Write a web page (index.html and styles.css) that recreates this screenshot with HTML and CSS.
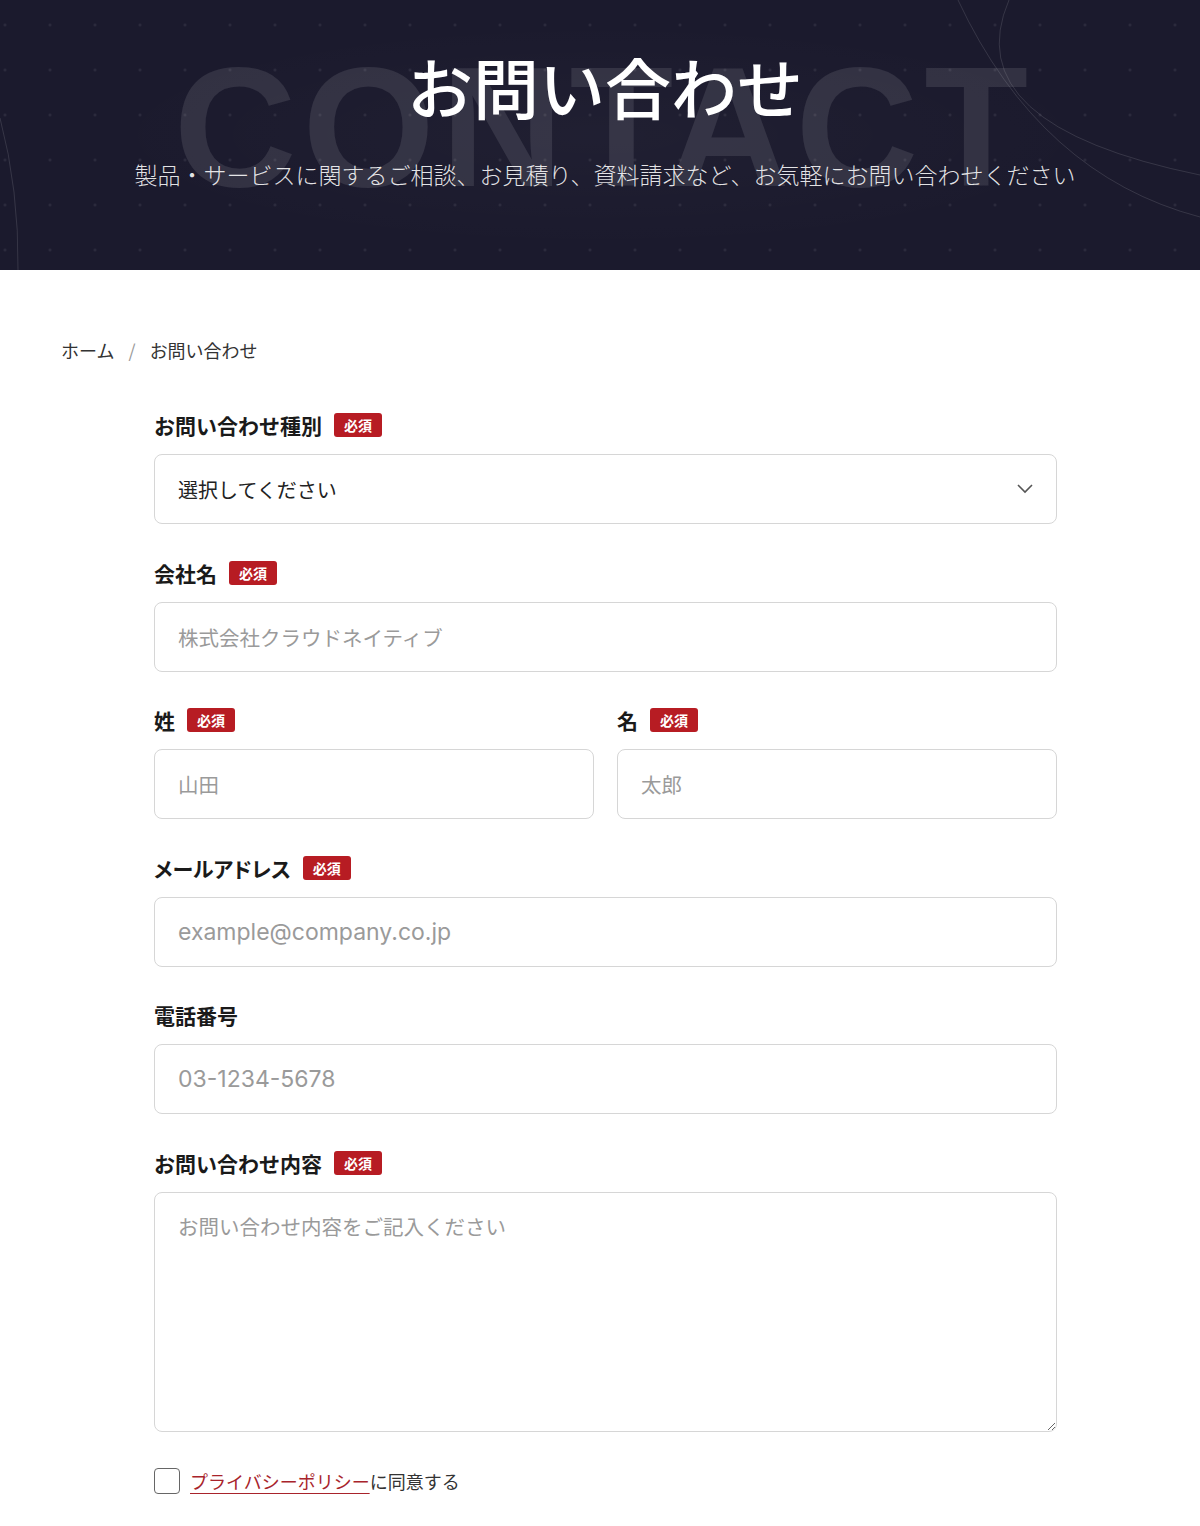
FILE: index.html
```html
<!DOCTYPE html>
<html lang="ja">
	<head>
		<meta charset="utf-8">
		<title>お問い合わせ</title>
		<link rel="stylesheet" href="styles.css">
	</head>
	<body>
		<!-- ページヘッダー -->
		<header class="hero">
			<svg class="hero-lines" width="1200" height="270" viewBox="0 0 1200 270">
				<path d="M0,118 Q19,190 18,270" />
				<path d="M958,0 Q1040,175 1200,217" />
				<path d="M1009,0 Q955,125 1200,175" />
			</svg>
			<div class="hero-bg" aria-hidden="true">CONTACT</div>
			<h1 class="hero-title">お問い合わせ</h1>
			<p class="hero-sub">製品・サービスに関するご相談、お見積り、資料請求など、お気軽にお問い合わせください</p>
		</header>

		<main class="wrap">
			<nav class="crumb">
				<a href="#">ホーム</a>
				<span class="sep">/</span>
				<span>お問い合わせ</span>
			</nav>

			<form class="form">
				<div class="field">
					<label class="label">お問い合わせ種別<em class="req">必須</em></label>
					<div class="select-box">
						<select class="input select">
							<option>選択してください</option>
							<option>製品について</option>
							<option>お見積り</option>
							<option>資料請求</option>
							<option>その他</option>
						</select>
						<svg class="chev" width="18" height="12" viewBox="0 0 18 12">
							<path d="M2,2 L9,9 L16,2" />
						</svg>
					</div>
				</div>

				<div class="field">
					<label class="label">会社名<em class="req">必須</em></label>
					<input class="input" type="text" placeholder="株式会社クラウドネイティブ">
				</div>

				<div class="row">
					<div class="field">
						<label class="label">姓<em class="req">必須</em></label>
						<input class="input" type="text" placeholder="山田">
					</div>
					<div class="field">
						<label class="label">名<em class="req">必須</em></label>
						<input class="input" type="text" placeholder="太郎">
					</div>
				</div>

				<div class="field">
					<label class="label kana">メールアドレス<em class="req">必須</em></label>
					<input class="input latin" type="email" placeholder="example@company.co.jp">
				</div>

				<div class="field">
					<label class="label">電話番号</label>
					<input class="input latin" type="tel" placeholder="03-1234-5678">
				</div>

				<div class="field">
					<label class="label">お問い合わせ内容<em class="req">必須</em></label>
					<textarea class="input area" placeholder="お問い合わせ内容をご記入ください"></textarea>
				</div>

				<label class="agree">
					<input type="checkbox" class="check">
					<span><a href="#">プライバシーポリシー</a>に同意する</span>
				</label>
			</form>
		</main>
	</body>
</html>
```

FILE: styles.css
```css
body, h1, p{
	margin: 0;
	padding: 0;
}
body{
	font-family: "Noto Sans CJK JP", "Noto Sans", sans-serif;
	color: #1a1a1a;
	background: #fff;
}
a{
	color: inherit;
	text-decoration: none;
}

/* ヘッダー */
.hero{
	position: relative;
	height: 270px;
	overflow: hidden;
	box-sizing: border-box;
	padding: 46px 0 0 10px;
	text-align: center;
	background-color: #1b1a2d;
	background-image:
		radial-gradient(circle, rgba(255,255,255,0.09) 1px, transparent 1.5px),
		radial-gradient(ellipse at 50% 50%, rgba(255,255,255,0.025), transparent 60%);
	background-size: 45px 45px, 100% 100%;
	background-position: -17.5px 2.5px, 0 0;
}
.hero-lines{
	position: absolute;
	left: 0;
	top: 0;
}
.hero-lines path{
	fill: none;
	stroke: rgba(255,255,255,0.12);
	stroke-width: 1;
}
.hero-bg{
	position: absolute;
	left: 0;
	right: 0;
	top: 42px;
	font-family: "Liberation Sans", Arial, sans-serif;
	font-weight: bold;
	font-size: 170px;
	line-height: 1;
	letter-spacing: 6px;
	color: rgba(255,255,255,0.1);
	padding-left: 8px;
}
.hero-title{
	position: relative;
	font-size: 66px;
	line-height: 79px;
	font-weight: 500;
	color: #fff;
	margin-bottom: 31px;
}
.hero-sub{
	position: relative;
	font-size: 23px;
	line-height: 36px;
	font-weight: 300;
	color: rgba(255,255,255,0.88);
}

/* 本文 */
.wrap{
	padding: 67px 60px 60px;
}
.crumb{
	font-size: 18px;
	line-height: 27px;
	color: #333;
	margin-left: 1px;
}
.crumb .sep{
	color: #999;
	margin: 0 10px;
}
.form{
	width: 903px;
	margin: 46px 0 0 94px;
}
.field{
	margin-bottom: 33.6px;
}
.row{
	display: grid;
	grid-template-columns: 1fr 1fr;
	gap: 23px;
}
.label{
	display: flex;
	align-items: center;
	height: 30px;
	font-size: 21px;
	font-weight: bold;
	color: #1a1a1a;
	margin-bottom: 14px;
}
.kana{
	font-feature-settings: "palt";
}
.req{
	display: inline-block;
	margin-left: 12px;
	padding: 0 10px;
	height: 24px;
	line-height: 24px;
	font-size: 14px;
	font-style: normal;
	font-weight: bold;
	color: #fff;
	background: #b71c23;
	border-radius: 3px;
	font-feature-settings: normal;
}
.input{
	display: block;
	width: 100%;
	height: 70px;
	box-sizing: border-box;
	padding: 0 23px;
	font-family: "Noto Sans CJK JP", "Noto Sans", sans-serif;
	font-size: 20.5px;
	color: #222;
	background: #fff;
	border: 1px solid #d6d6d6;
	border-radius: 8px;
	outline: none;
}
.input::placeholder{
	color: #9a9a9a;
}
.latin{
	font-family: Inter, "Noto Sans", "Noto Sans CJK JP", sans-serif;
	font-size: 23px;
}
.select-box{
	position: relative;
}
.select{
	appearance: none;
	-webkit-appearance: none;
	font-size: 20px;
}
.chev{
	position: absolute;
	right: 23px;
	top: 29px;
	pointer-events: none;
}
.chev path{
	fill: none;
	stroke: #555;
	stroke-width: 1.6;
}
.area{
	height: 240px;
	padding: 18px 23px;
	line-height: 30px;
	resize: vertical;
}
.agree{
	display: flex;
	align-items: center;
	gap: 10px;
	margin-top: 36px;
	font-size: 18px;
	color: #333;
}
.check{
	appearance: none;
	-webkit-appearance: none;
	margin: 0;
	width: 26px;
	height: 26px;
	border: 1.5px solid #666;
	border-radius: 4px;
	background: #fff;
}
.agree a{
	color: #a8232b;
	text-decoration: underline;
	text-underline-offset: 4px;
}
```
